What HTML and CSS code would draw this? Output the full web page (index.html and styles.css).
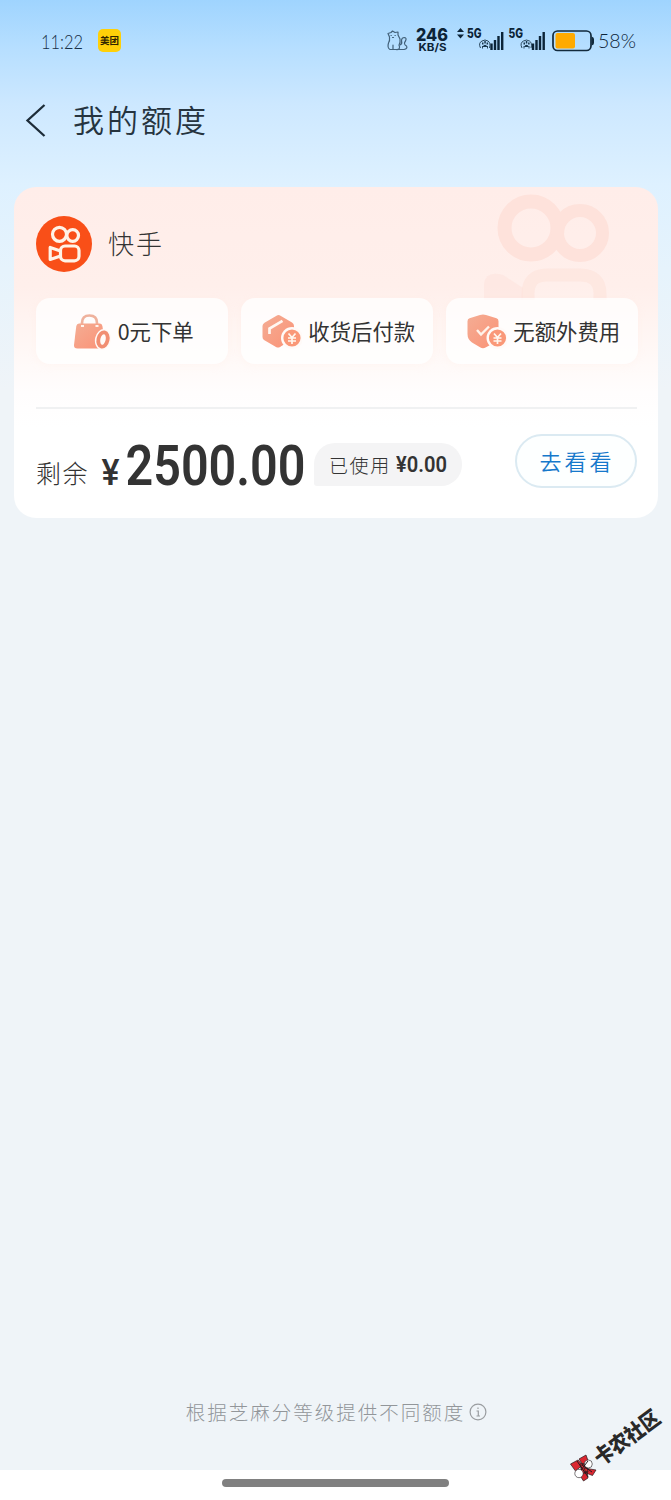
FILE: index.html
```html
<!DOCTYPE html>
<html lang="zh-CN">
<head>
<meta charset="utf-8">
<title>我的额度</title>
<link rel="stylesheet" href="styles.css">
</head>
<body>
<div class="screen">
  <header class="status">
    <svg class="clock" width="44" height="28" viewBox="0 0 44 28"><text x="0" y="21" textLength="42" lengthAdjust="spacingAndGlyphs">11:22</text></svg>
    <span class="app-badge">美团</span>
    <svg class="signals" width="254" height="32" viewBox="386 24 254 32">
      <g fill="none" stroke="#42617a" stroke-width="1.2" stroke-linejoin="round" stroke-linecap="round">
        <path d="M389.500 37 L388 33.500 L391 32.500 L392.500 31 L395 32.500 L398 32 L398 35 L400 39 Q400.500 43 399 45 Q401 50 396 49.500 H390 Q387 48 388.500 43 Q390 41 389.500 37"/>
        <path d="M399 49.500 H404 Q408 48.500 406.500 46 Q403 44 405.500 41 Q407 38 404.500 37.500 Q401.500 37.500 401.500 41 Q402.500 44 400 45"/>
        <path d="M391 35.500h.3M395 35.500h.3M392.500 37.500h1M393 45v4"/>
      </g>
      <text class="heavy" x="416" y="40.500" font-size="17.500" textLength="32" lengthAdjust="spacingAndGlyphs">246</text>
      <text class="heavy unit" x="418.500" y="51" font-size="10.500" textLength="28" lengthAdjust="spacingAndGlyphs">KB/S</text>
      <path d="M457 32 L460.500 28 L464 32Z M457 34.500 L460.500 38.500 L464 34.500Z" fill="#0c2438"/>
      <text class="heavy" x="467" y="38" font-size="12.500" textLength="14.500" lengthAdjust="spacingAndGlyphs">5G</text>
      <text class="heavy" x="508.500" y="38" font-size="12.500" textLength="14.500" lengthAdjust="spacingAndGlyphs">5G</text>
      <g id="bars">
        <path d="M491.500 50V43.500 M495 50V40 M498.500 50V36 M502.200 50V32" stroke="#0c2438" stroke-width="2.400"/>
        <path d="M480.500 48 Q478 43 482 41 Q485 39 488 41 Q491 43 489.500 48 M482.500 48.500 V46 M487.500 48.500 V46" fill="none" stroke="#29465c" stroke-width="1"/>
        <path d="M482 42.500h1.500v2h-1.500z M484.300 41h1.500v2.500h-1.500z M486.600 42.500h1.500v2h-1.500z M482.500 47 Q485 42.500 487.500 47Z" fill="#18364c"/>
      </g>
      <use href="#bars" x="41.500"/>
      <rect x="553" y="31" width="38" height="19.500" rx="4.500" fill="none" stroke="#122a3c" stroke-width="1.700"/>
      <rect x="555.500" y="33" width="19.500" height="15.500" rx="2" fill="#ffaa00"/>
      <path d="M591.500 36.500 Q594 37 594 39 V43 Q594 45 591.500 45.500Z" fill="#122a3c"/>
      <text class="percent" x="598" y="48" font-size="20" textLength="38" lengthAdjust="spacingAndGlyphs">58%</text>
    </svg>
  </header>

  <nav class="titlebar">
    <svg width="22" height="36" viewBox="0 0 22 36"><path d="M19.500 3 L2.500 18.500 L19.500 34" fill="none" stroke="#1d2c38" stroke-width="2.300"/></svg>
    <h1>我的额度</h1>
  </nav>

  <main class="card">
    <svg class="card-mark" width="130" height="114" viewBox="484 186 130 114" fill="none" stroke="#fee2db">
      <circle cx="531" cy="228" r="26.500" stroke-width="14"/>
      <circle cx="580" cy="233" r="22.500" stroke-width="13"/>
      <path d="M528 306 V294 Q528 275 547 275 H580 Q600 275 600 294 V306" stroke-width="13" opacity=".6"/>
      <path d="M484 306 V284 Q486 270 503 275 L523 288 V306Z" fill="#fee2db" stroke="none" opacity=".5"/>
    </svg>
    <div class="brand">
      <svg width="56" height="56" viewBox="0 0 56 56">
        <circle cx="28" cy="28" r="28" fill="#f94f18"/>
        <g fill="none" stroke="#fff3e7" stroke-width="3.200" stroke-linejoin="round">
          <circle cx="23.500" cy="18.300" r="7"/><circle cx="36.700" cy="19.500" r="5.800"/>
          <rect x="24.500" y="30" width="18.500" height="14.800" rx="4.500"/>
          <path d="M24.500 35 L14.200 31.500 V43.500 L24.500 40"/>
        </g>
      </svg>
      <span>快手</span>
    </div>
    <div class="chips">
      <div class="chip">
        <svg width="38" height="38" viewBox="0 0 38 38">
          <defs><linearGradient id="peach" x1="0" y1="0" x2="1" y2="1"><stop offset="0" stop-color="#f4ad94"/><stop offset="1" stop-color="#fb9276"/></linearGradient></defs>
          <path d="M9 14 V10 Q9 2.500 16.500 2.500 Q24 2.500 24 10 V14" fill="none" stroke="#efb29d" stroke-width="2.700"/>
          <path d="M6 10.500 H27 Q29 10.500 29.400 13 L32 32 Q32 35.500 28.500 35.500 H4.500 Q.8 35.500 1 32 L3.300 13 Q3.700 10.500 6 10.500Z" fill="url(#peach)"/>
          <path d="M8 13h3M22.500 13h3" stroke="#fff4ed" stroke-width="1.800"/>
          <ellipse cx="30" cy="26.500" rx="5" ry="7.500" transform="rotate(12 30 26.500)" fill="#fffaf7" stroke="#fffaf7" stroke-width="6"/>
          <ellipse cx="30" cy="26.500" rx="4.600" ry="7.300" transform="rotate(12 30 26.500)" fill="#fffaf7" stroke="#f18e72" stroke-width="3.800"/>
        </svg>
        <span>0元下单</span>
      </div>
      <div class="chip">
        <svg width="40" height="36" viewBox="0 0 40 36">
          <path d="M14.500 1.700 Q16.500 .5 18.500 1.700 L30 8.500 Q32 9.700 32 12 V24 L18 33 Q16 34.200 14 33 L2 26 Q.5 25 .5 23 V12 Q.5 10 2.500 8.800Z" fill="url(#peach)"/>
          <path d="M7.500 20 V14.500 L20.500 6.800" fill="none" stroke="#fff7f1" stroke-width="2.700"/>
          <circle cx="30" cy="24" r="11" fill="#fffaf8"/><circle cx="30" cy="24" r="8.600" fill="#fa9878"/>
          <path d="M26.500 19.500 L30 23.500 L33.500 19.500 M26 24H34 M26 27H34 M30 23V30" fill="none" stroke="#fff7ef" stroke-width="1.700"/>
        </svg>
        <span>收货后付款</span>
      </div>
      <div class="chip">
        <svg width="40" height="36" viewBox="0 0 40 36">
          <path d="M13 1 Q16 -.2 19 1 L29.500 4.300 Q31.500 5 31.500 7.300 V21 Q31.500 26 26 29.500 L19 33.300 Q16 35 13 33.300 L5 28.500 Q.5 25.500 .5 20 V7.300 Q.5 5 2.500 4.300Z" fill="url(#peach)"/>
          <path d="M10 16 L14 20.500 L22 12.500" fill="none" stroke="#fff3eb" stroke-width="2.400"/>
          <circle cx="30.500" cy="24" r="11" fill="#fffaf8"/><circle cx="30.500" cy="24" r="8.600" fill="#fa9878"/>
          <path d="M27 19.500 L30.500 23.500 L34 19.500 M26.500 24H34.500 M26.500 27H34.500 M30.500 23V30" fill="none" stroke="#fff7ef" stroke-width="1.700"/>
        </svg>
        <span>无额外费用</span>
      </div>
    </div>
    <div class="summary">
      <span class="remain">剩余</span>
      <svg class="amount" width="206" height="72" viewBox="100 430 206 72">
        <text x="101.500" y="486" font-size="36" font-weight="500" textLength="18" lengthAdjust="spacingAndGlyphs">¥</text>
        <text x="125.500" y="486" font-size="56" font-weight="600" textLength="180" lengthAdjust="spacingAndGlyphs">2500.00</text>
      </svg>
      <div class="used"><span>已使用</span><svg width="52" height="28" viewBox="0 0 52 28"><text x="0" y="22" font-size="21.500" font-weight="600" textLength="51" lengthAdjust="spacingAndGlyphs">¥0.00</text></svg></div>
      <div class="go">去看看</div>
    </div>
  </main>

  <footer class="note">
    <span>根据芝麻分等级提供不同额度</span>
    <svg width="18" height="18" viewBox="0 0 18 18" fill="none" stroke="#9a9da0" stroke-width="1.200"><circle cx="9" cy="9" r="7.900"/><path d="M7.500 8H9.300V13M7.500 13H11M9 4.500V6"/></svg>
  </footer>
  <div class="gesture"><div class="handle"></div></div>

  <svg class="watermark" width="111" height="90" viewBox="560 1400 111 90">
    <g stroke="#221c20" stroke-width="1">
      <path d="M570.500 1464 L578 1460 L582.500 1465 L575.500 1471Z M579 1459 L586 1455 L588.500 1462 L583 1465Z M584 1468 L596 1470 L592.500 1475.500 L586 1473Z M580 1475.500 L587 1471 L588 1478 L583.500 1481Z M580 1464 L586 1463 L588 1472 L582 1474Z" fill="#db2731" stroke-width=".7"/>
      <circle cx="588.300" cy="1464" r="4" fill="#fff" stroke-width=".6"/><circle cx="579" cy="1473.500" r="4.200" fill="#fff" stroke-width=".6"/>
      <path d="M577 1461 L588 1477 M582 1465 L592 1472 M581 1470 L588 1461" fill="none"/>
    </g>
    <text transform="translate(601 1466.500) rotate(-36.500)" x="0" y="0" font-size="21.500" textLength="76" lengthAdjust="spacingAndGlyphs">卡农社区</text>
  </svg>
</div>
</body>
</html>
```
FILE: styles.css
```css
* { box-sizing: border-box; }
body {
  margin: 0;
  font-family: "Noto Sans CJK SC", sans-serif;
  font-weight: 300;
  color: #333;
}
.screen {
  position: relative;
  display: flex;
  flex-direction: column;
  width: 671px;
  height: 1500px;
  background: linear-gradient(180deg, #9fd4fe 0, #b5deff 45px, #cde8ff 105px, #def1ff 185px, #e6f3fc 270px, #eff4f8 390px);
}
svg { display: block; flex: none; }
span { white-space: nowrap; }
.status {
  display: flex;
  align-items: center;
  height: 82px;
  padding: 0 31px 2px 41px;
}
.clock { font: 300 20.5px Lato, sans-serif; fill: #183047; margin-top: 4px; }
.app-badge {
  width: 23px;
  height: 23px;
  margin-left: 13px;
  border-radius: 5px;
  background: #ffd008;
  color: #302500;
  font-size: 9.5px;
  font-weight: 700;
  line-height: 23px;
  text-align: center;
}
.signals { margin-left: auto; fill: #0c2438; }
.heavy { font-family: Inter, sans-serif; font-weight: 800; }
.unit { font-weight: 700; }
.percent { font-family: Lato, sans-serif; font-weight: 300; }
.titlebar {
  display: flex;
  align-items: center;
  gap: 26px;
  height: 76px;
  padding-left: 25px;
}
h1 {
  margin: -3px 0 0;
  color: #26343f;
  font-size: 31px;
  font-weight: 350;
  line-height: 44px;
  letter-spacing: 3px;
}
.card {
  position: relative;
  width: 644px;
  height: 331px;
  margin: 29px 0 0 14px;
  padding: 29px 21px 0 22px;
  border-radius: 22px;
  background: linear-gradient(180deg, #ffede9 0, #ffefeb 100px, #fff8f6 165px, #fffdfd 205px, #fff 240px);
}
.card-mark { position: absolute; top: -1px; right: 44px; }
.brand {
  display: flex;
  align-items: center;
  gap: 17px;
  font-size: 26px;
  letter-spacing: 2px;
  line-height: 56px;
}
.brand span { margin: -1px 0 1px -1px; }
.chips {
  position: relative;
  display: grid;
  grid-template-columns: repeat(3, 192px);
  gap: 13px;
  margin-top: 26px;
}
.chip {
  display: flex;
  align-items: center;
  justify-content: center;
  gap: 6.5px;
  height: 66px;
  padding: 0 0 1px 3px;
  border-radius: 14px;
  background: rgba(255, 255, 255, .76);
  box-shadow: 0 2px 8px rgba(255, 225, 215, .15);
  font-size: 21.4px;
  font-weight: 400;
  line-height: 32px;
}
.chip svg { margin-top: 2px; }
.summary {
  display: flex;
  align-items: center;
  height: 109px;
  margin-top: 43px;
  border-top: 2px solid #f0f1f2;
}
.remain {
  width: 64px;
  margin-top: 18px;
  font-size: 25px;
  letter-spacing: 1.5px;
  line-height: 36px;
}
.amount { margin-top: 4px; }
.amount text, .used text { font-family: Roboto, sans-serif; fill: #333; }
.used {
  display: flex;
  align-items: center;
  gap: 5px;
  width: 148px;
  height: 43px;
  margin: 3px 0 0 8px;
  padding-left: 15px;
  border-radius: 21px 21px 21px 3px;
  background: #f4f4f5;
  font-size: 19px;
  letter-spacing: 1.6px;
  line-height: 40px;
}
.used span { padding-top: 1px; }
.used svg { margin-top: -1px; letter-spacing: 0; }
.go {
  width: 122px;
  height: 54px;
  margin: -4px 0 0 auto;
  padding-left: 2px;
  border: 2px solid #dbeaf2;
  border-radius: 27px;
  background: #fdffff;
  color: #1678cb;
  font-size: 22px;
  font-weight: 350;
  letter-spacing: 3px;
  line-height: 48px;
  text-align: center;
}
.note {
  display: flex;
  align-items: center;
  justify-content: center;
  gap: 4px;
  height: 30px;
  margin-top: auto;
  margin-bottom: 43px;
  padding-left: 2px;
  color: #92969a;
  font-size: 19.5px;
  letter-spacing: 2px;
}
.note span { margin-top: -2px; }
.gesture { height: 30px; padding-top: 9px; background: #fff; }
.handle { width: 227px; height: 8px; margin-left: 222px; border-radius: 4px; background: #808080; }
.watermark {
  position: absolute;
  right: 0;
  bottom: 10px;
  fill: #292929;
  font-weight: 900;
}
```
